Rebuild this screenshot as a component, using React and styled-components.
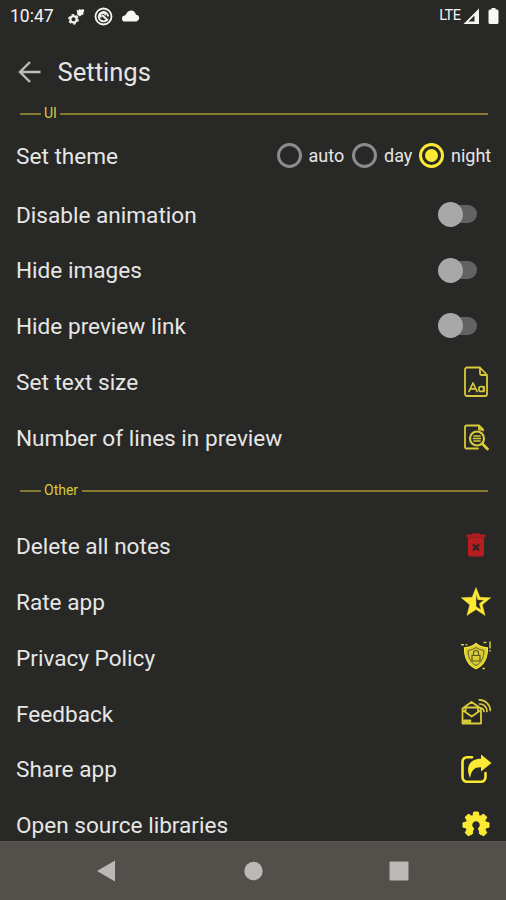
import React from 'react';
import styled, { createGlobalStyle } from 'styled-components';

const YELLOW = '#fbe934';
const OLIVE = '#d9cb38';

const GlobalStyle = createGlobalStyle`
  * { box-sizing: border-box; }
  body { margin: 0; background: #282827; font-family: Roboto, "Liberation Sans", sans-serif; }
`;

const Screen = styled.div`
  width: 506px;
  height: 900px;
  display: flex;
  flex-direction: column;
  overflow: hidden;
  background: #282827;
  color: #e6e6e5;
`;

const StatusBar = styled.header`
  height: 32px;
  flex: none;
  display: flex;
  align-items: center;
  justify-content: space-between;
  padding: 0 7.5px 0 10px;
  color: #f4f4f2;
`;

const StatusGroup = styled.div`
  display: flex;
  align-items: center;
`;

const Clock = styled.span`
  font-size: 17.5px;
  width: 57.5px;
`;

const Network = styled.span`
  font-size: 14.5px;
  letter-spacing: -0.5px;
  margin: -1px 2px 0 0;
`;

const TitleBar = styled.div`
  height: 80px;
  flex: none;
  display: flex;
  align-items: center;
  gap: 16.5px;
  padding-left: 18px;
`;

const Title = styled.h1`
  margin: 0;
  font-size: 25.6px;
  font-weight: 400;
`;

const SectionRule = styled.div`
  height: 16px;
  flex: none;
  display: flex;
  align-items: center;
  padding: 0 18px 0 20px;
  margin: ${(p) => p.$margin};
`;

const RuleLine = styled.div`
  height: 2px;
  background: #85792f;
  width: ${(p) => (p.$lead ? '21px' : 'auto')};
  flex: ${(p) => (p.$lead ? 'none' : 1)};
`;

const RuleLabel = styled.span`
  width: ${(p) => p.$width}px;
  padding: 0 0 2px 3px;
  line-height: 14px;
  font-size: 14px;
  color: ${OLIVE};
`;

const Settings = styled.main`
  flex: 1;
  min-height: 0;
  display: flow-root;
  margin-top: -8px;
  overflow: hidden;
`;

const Row = styled.div`
  height: ${(p) => p.$height || 55.8}px;
  display: flex;
  align-items: center;
  justify-content: space-between;
  padding: 0 14px 0 16px;
`;

const Label = styled.span`
  font-size: 22.6px;
  padding-top: 1.6px;
  white-space: nowrap;
`;

const RadioGroup = styled.div`
  display: flex;
  align-items: center;
`;

const RadioItem = styled.label`
  display: flex;
  align-items: center;
  gap: 7px;
  width: ${(p) => p.$width}px;
  font-size: 18px;
  white-space: nowrap;
`;

const RadioRing = styled.span`
  width: 25px;
  height: 25px;
  flex: none;
  display: grid;
  place-items: center;
  border: 3px solid ${(p) => (p.$on ? YELLOW : '#8c8c8c')};
  border-radius: 50%;
`;

const RadioDot = styled.span`
  width: 13px;
  height: 13px;
  border-radius: 50%;
  background: ${YELLOW};
`;

const Track = styled.span`
  width: 34px;
  height: 18px;
  margin-right: 15px;
  display: flex;
  align-items: center;
  border-radius: 9px;
  background: #626262;
`;

const Thumb = styled.span`
  width: 25px;
  height: 25px;
  flex: none;
  margin-left: -5px;
  border-radius: 50%;
  background: #a8a8a8;
`;

const NavBar = styled.nav`
  height: 59px;
  flex: none;
  display: grid;
  grid-template-columns: 20px 20px 20px;
  column-gap: 126px;
  justify-content: center;
  align-items: center;
  background: #534f4b;
  border-top: 1px solid #5b5753;
`;

const Icon = ({ children }) => (
  <svg width="32" height="32" viewBox="0 0 32 32" fill="none">
    {children}
  </svg>
);

const TextSizeIcon = () => (
  <Icon>
    <g stroke={OLIVE} strokeWidth="1.8" strokeLinejoin="round" strokeLinecap="round">
      <path d="M7 1.5h13l7 7.500v19a2 2 0 0 1-2 2H7a2 2 0 0 1-2-2V3.500a2 2 0 0 1 2-2zM20 1.500v6a1.500 1.500 0 0 0 1.500 1.500H27" />
      <path d="M9 25.500l4-8.500 4 8.500M10.500 22.800h5M24 20.500v5" strokeWidth="1.700" />
      <circle cx="21.300" cy="23" r="2.500" strokeWidth="1.700" />
    </g>
  </Icon>
);

const PreviewIcon = () => (
  <Icon>
    <g stroke={OLIVE} strokeWidth="1.8" strokeLinejoin="round" strokeLinecap="round">
      <path d="M23 8.500V7.500l-4-4H6.500a1.500 1.500 0 0 0-1.500 1.500v20a1.500 1.500 0 0 0 1.500 1.500H18M19 3.500V7.500h4" />
      <circle cx="17" cy="16.500" r="7" strokeWidth="2.200" />
      <path d="M22.500 22l5 5" strokeWidth="2.800" />
      <path d="M14 14h6M13.500 16.500h7M14 19h6" strokeWidth="1.700" />
    </g>
  </Icon>
);

const DeleteIcon = () => (
  <Icon>
    <path d="M6.500 4.500h5l1-1.300h7l1 1.300h5v3h-19z" fill="#b01d20" />
    <path d="M8 7.500h16v17a2 2 0 0 1-2 2H10a2 2 0 0 1-2-2z" fill="#b51d20" />
    <path d="M13 14.500l6 6M19 14.500l-6 6" stroke="#2b2424" strokeWidth="2.200" />
  </Icon>
);

const RateIcon = () => (
  <Icon>
    <path
      fillRule="evenodd"
      fill={YELLOW}
      stroke={YELLOW}
      strokeWidth=".4"
      d="M16 1.500l3.900 9.700 10.800.6-8.400 7 2.800 10.700-9.100-6-9.100 6 2.800-10.700-8.400-7 10.800-.6zM16 8v12.500l5 3.300-1.700-6.100 4.700-3.700-6.200-.3z"
    />
  </Icon>
);

const PrivacyIcon = () => (
  <Icon>
    <path d="M16 2.500c3 2.500 7 4 11.500 4.300 0 9.500-2.500 17-11.500 21-9-4-11.500-11.500-11.500-21C9 6.500 13 5 16 2.500z" fill={OLIVE} stroke={YELLOW} strokeWidth="1.200" />
    <path d="M16 6.500c2.500 1.800 5 2.500 8 3-.2 7-2.500 12-8 15-5.500-3-7.800-8-8-15 3-.5 5.500-1.200 8-3z" stroke="#6b6523" strokeWidth="1" />
    <path d="M13.500 14V12a2.500 2.500 0 0 1 5 0v2M12 14.500h8V20h-8z" stroke="#5c5621" strokeWidth="1.200" />
    <path d="M1 3.800h3M5.500 3.800h1.800M23.500 1.500h3M30 .5v7M30 9v1.500M22.500 27.500h2.500" stroke={OLIVE} strokeWidth="1.500" />
  </Icon>
);

const FeedbackIcon = () => (
  <Icon>
    <g stroke={OLIVE} strokeWidth="1.800" strokeLinejoin="round" strokeLinecap="round">
      <path d="M2.500 11.500L11.500 5 21 11.500v15H2.500zM2.500 13l9.200 6.500 9.300-6.500M5.500 14.500V10.500h12.500V14.500M4 23.500h6.500M4 25.500h6.500" />
      <path d="M20.500 11a3.500 3.500 0 0 1 3.500 3.500M19.500 7a7 7 0 0 1 7.500 7.500M19 2.800a11 11 0 0 1 11.300 10.700" strokeWidth="1.700" />
    </g>
  </Icon>
);

const ShareIcon = () => (
  <Icon>
    <path d="M12 4.200H7A4.500 4.500 0 0 0 2.500 8.700v15.600A4.500 4.500 0 0 0 7 28.800h14a4.500 4.500 0 0 0 4.500-4.500V20" stroke={YELLOW} strokeWidth="2.600" strokeLinecap="round" />
    <path d="M21 1.500l10.500 8.500L21 18.500v-4.300c-6-.3-9.500 2.300-11 10.800C4.500 12 11.500 5.800 21 5.800z" fill={YELLOW} />
  </Icon>
);

const OpenSourceIcon = () => (
  <Icon>
    <g fill={YELLOW}>
      {[-135, -90, -45, 0, 45, 90, 135].map((angle) => (
        <path key={angle} d="M13.800 3h4.400l1.300 5h-7z" stroke={YELLOW} strokeLinejoin="round" transform={`rotate(${angle} 16 16)`} />
      ))}
      <path d="M14.200 19.300L11.700 26A10.400 10.400 0 1 1 20.300 26L17.800 19.300A3.700 3.700 0 1 0 14.200 19.300z" />
    </g>
  </Icon>
);

const GearsIcon = () => (
  <svg width="17" height="17" viewBox="0 0 17 17" fill="none">
    <circle cx="5.500" cy="11.300" r="3.200" stroke="#f4f4f2" strokeWidth="2.200" />
    <circle cx="5.500" cy="11.300" r="4.700" stroke="#f4f4f2" strokeWidth="1.400" strokeDasharray="2.500 2.420" />
    <path d="M8.500 2l2 .3 1-1.300 1.500.8L15.500 1l.8 2-1 1.500.2 2-2 .5-1.500 1.500-1.500-1L8.800 6l.5-1.700z" fill="#f4f4f2" />
  </svg>
);

const TargetIcon = () => (
  <svg width="19" height="19" viewBox="0 0 19 19" fill="none" stroke="#f4f4f2">
    <circle cx="9.500" cy="9.500" r="8" strokeWidth="1.800" />
    <path d="M12.500 13.300A4.700 4.700 0 1 1 14.200 9.500M14 13.500L8 8" strokeWidth="1.900" />
    <path d="M7.500 10.500a2.500 2.500 0 1 1 4-2" strokeWidth="1.500" />
  </svg>
);

const CloudIcon = () => (
  <svg width="18" height="12" viewBox="0 0 18 12">
    <path d="M3.200 11.500a3 3 0 0 1-.3-6C4.200 4.700 5.300.5 8.900.5c3 0 4.500 1.900 5 4.300a3.400 3.400 0 0 1 .6 6.700z" fill="#f8f8f6" />
  </svg>
);

const StatusIcons = styled.div`
  display: flex;
  align-items: center;
  gap: 9px;
`;

const SignalIcon = () => (
  <svg width="17" height="17" viewBox="0 0 17 17">
    <path fillRule="evenodd" d="M16 .5V16H.5zM11.500 7.500L5.500 13.500h6z" fill="#f4f4f2" />
  </svg>
);

const BatteryIcon = () => (
  <svg width="11" height="18" viewBox="0 0 11 18">
    <path d="M3.500 1h4v1.500H9a1.500 1.500 0 0 1 1.500 1.500v11.500A1.500 1.500 0 0 1 9 17H2a1.500 1.500 0 0 1-1.500-1.500V4A1.500 1.500 0 0 1 2 2.500h1.500z" fill="#f8f8f6" />
  </svg>
);

const SignalGroup = styled(StatusGroup)`
  svg + svg { margin-left: 8px; }
`;

const Switch = () => (
  <Track>
    <Thumb />
  </Track>
);

const Radio = ({ label, on, width }) => (
  <RadioItem $width={width}>
    <RadioRing $on={on}>{on && <RadioDot />}</RadioRing>
    {label}
  </RadioItem>
);

const Section = ({ label, width, margin }) => (
  <SectionRule $margin={margin}>
    <RuleLine $lead />
    <RuleLabel $width={width}>{label}</RuleLabel>
    <RuleLine />
  </SectionRule>
);

const uiRows = [
  ['Disable animation', Switch],
  ['Hide images', Switch],
  ['Hide preview link', Switch],
  ['Set text size', TextSizeIcon],
  ['Number of lines in preview', PreviewIcon],
];

const otherRows = [
  ['Delete all notes', DeleteIcon],
  ['Rate app', RateIcon],
  ['Privacy Policy', PrivacyIcon],
  ['Feedback', FeedbackIcon],
  ['Share app', ShareIcon],
  ['Open source libraries', OpenSourceIcon],
];

const Rows = ({ items }) =>
  items.map(([label, Control]) => (
    <Row key={label}>
      <Label>{label}</Label>
      <Control />
    </Row>
  ));

export default function App() {
  return (
    <Screen>
      <GlobalStyle />
      <StatusBar>
        <StatusGroup>
          <Clock>10:47</Clock>
          <StatusIcons>
            <GearsIcon />
            <TargetIcon />
            <CloudIcon />
          </StatusIcons>
        </StatusGroup>
        <SignalGroup>
          <Network>LTE</Network>
          <SignalIcon />
          <BatteryIcon />
        </SignalGroup>
      </StatusBar>
      <TitleBar>
        <svg width="23" height="22" viewBox="0 0 23 22" fill="none" stroke="#bdbdbb" strokeWidth="2.400">
          <path d="M22.500 11H2M12 1L2 11l10 10" />
        </svg>
        <Title>Settings</Title>
      </TitleBar>
      <Settings>
        <Section label="UI" width={19} margin="2px 0 2px" />
        <Row $height={62.500}>
          <Label>Set theme</Label>
          <RadioGroup>
            <Radio label="auto" width={75.500} />
            <Radio label="day" width={67} />
            <Radio label="night" width={73} on />
          </RadioGroup>
        </Row>
        <Rows items={uiRows} />
        <Section label="Other" width={41} margin="17.500px 0 19px" />
        <Rows items={otherRows} />
      </Settings>
      <NavBar>
        <svg width="20" height="22" viewBox="0 0 20 22">
          <path d="M0 11L18 .5v21z" fill="#bbb9b5" />
        </svg>
        <svg width="20" height="20" viewBox="0 0 20 20">
          <circle cx="10.500" cy="10" r="9.200" fill="#bbb9b5" />
        </svg>
        <svg width="20" height="20" viewBox="0 0 20 20">
          <rect x=".5" y=".5" width="19" height="19" rx="1" fill="#bbb9b5" />
        </svg>
      </NavBar>
    </Screen>
  );
}
